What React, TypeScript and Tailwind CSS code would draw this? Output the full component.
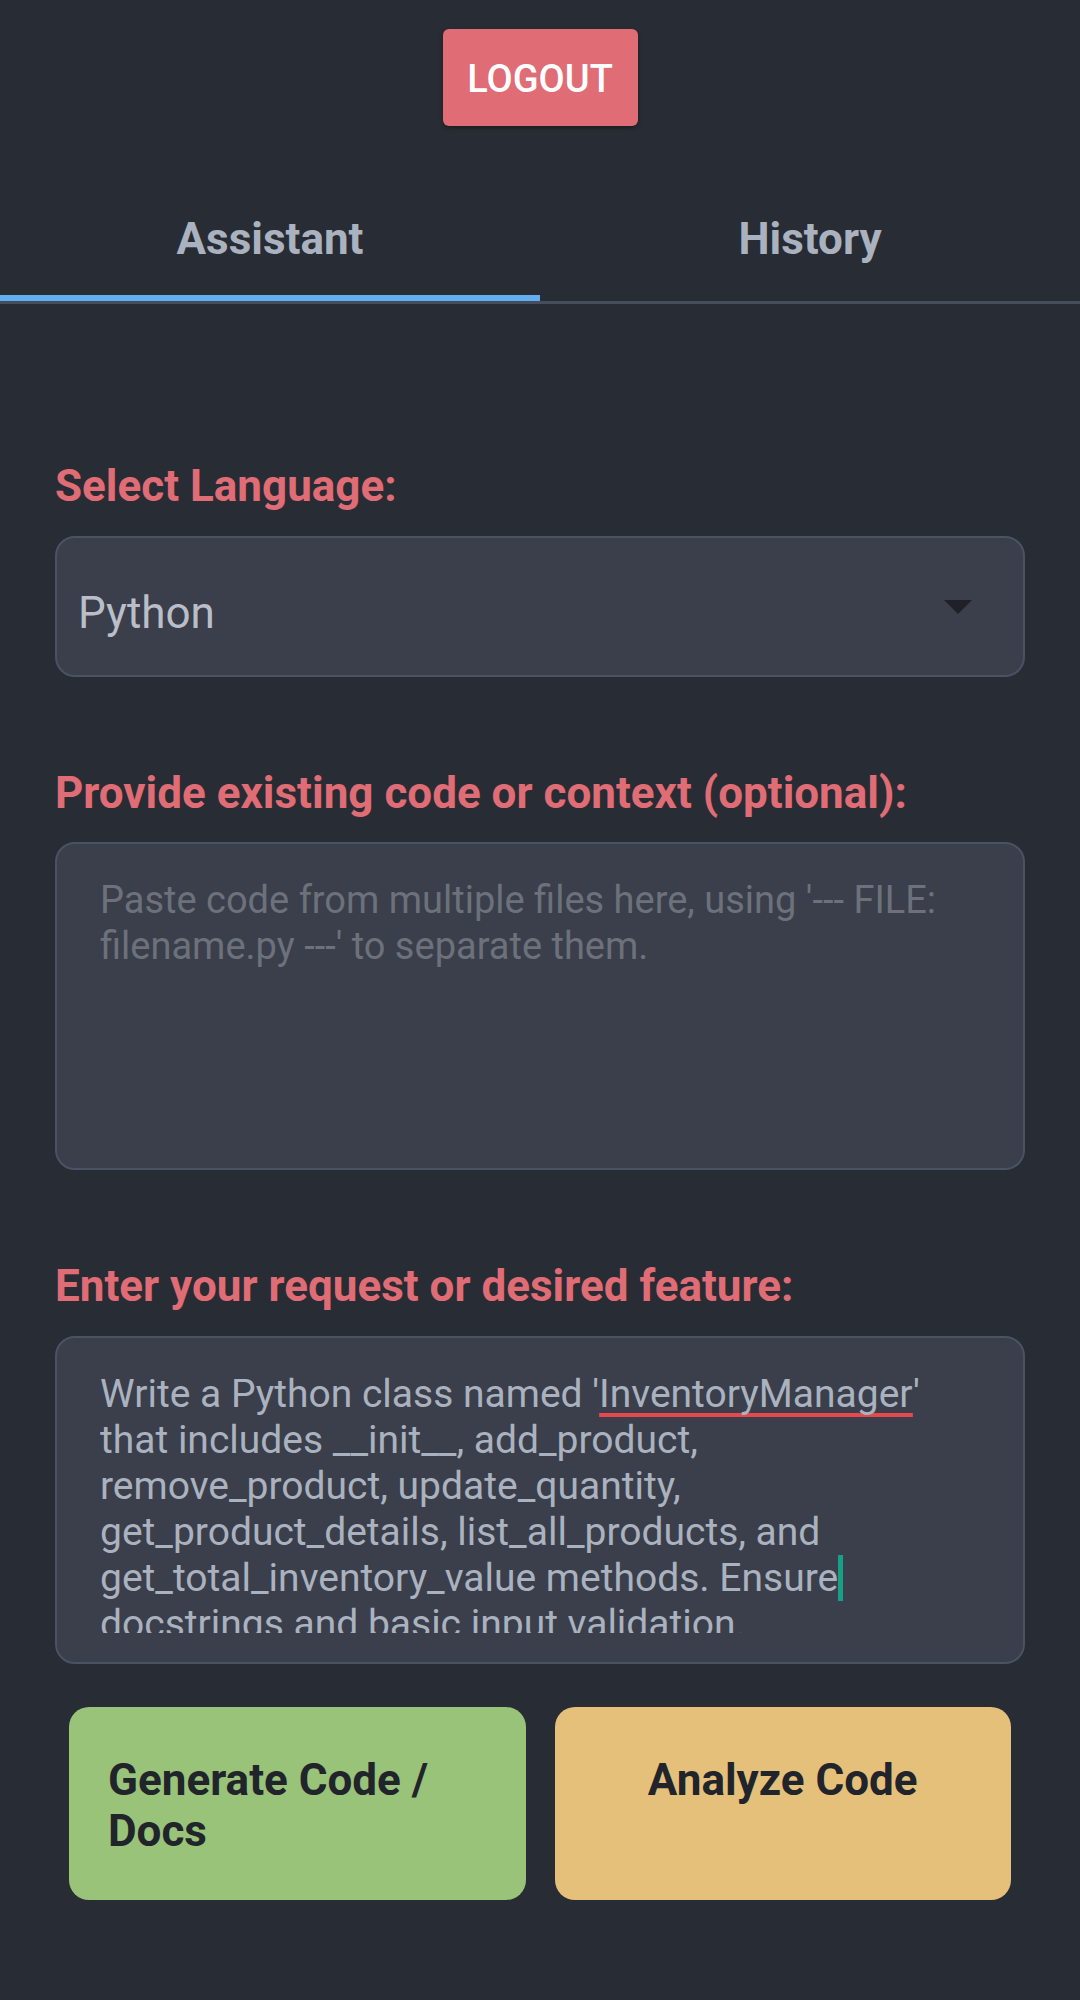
import { useState } from "react";

const request =
  "that includes __init__, add_product, remove_product, update_quantity, get_product_details, list_all_products, and get_total_inventory_value methods.";

export default function App() {
  const [tab, setTab] = useState<"assistant" | "history">("assistant");
  const [context, setContext] = useState("");

  return (
    <div className="min-h-screen bg-[#282c34] font-['Roboto',sans-serif]">
      <div className="flex justify-center pt-[29px]">
        <button className="h-[97px] w-[195px] rounded-[6px] bg-[#e06c75] pt-[4px] text-[38px] font-medium text-white shadow-[0_2px_4px_rgba(0,0,0,0.35)]">
          LOGOUT
        </button>
      </div>

      {/* tabs */}
      <div className="flex border-b-[3px] border-[#474d5a]">
        {(["assistant", "history"] as const).map((t) => (
          <button
            key={t}
            onClick={() => setTab(t)}
            className={`flex-1 pt-[87px] pb-[30px] text-center text-[44px] font-bold leading-[52px] text-[#abb2bf] border-b-[6px] ${
              tab === t ? "border-[#61afef]" : "border-transparent"
            }`}
          >
            {t === "assistant" ? "Assistant" : "History"}
          </button>
        ))}
      </div>

      <div className="px-[55px] pt-[156px] pb-[100px]">
        <label className="mb-[24px] block text-[44px] font-bold leading-[52px] text-[#e06c75]">
          Select Language:
        </label>
        <div className="flex h-[141px] items-center justify-between rounded-[20px] border-2 border-[#4b5263] bg-[#3a3f4b] pl-[21px] pr-[51px]">
          <span className="pt-[12px] text-[44px] text-[#b9bec8]">Python</span>
          <svg width="28" height="14" viewBox="0 0 28 14">
            <polygon points="0,0 28,0 14,14" fill="#1e2127" />
          </svg>
        </div>

        <label className="mt-[90px] mb-[23px] block text-[44px] font-bold leading-[52px] text-[#e06c75]">
          Provide existing code or context (optional):
        </label>
        <textarea
          value={context}
          onChange={(e) => setContext(e.target.value)}
          placeholder="Paste code from multiple files here, using '--- FILE: filename.py ---' to separate them."
          className="block h-[328px] w-full resize-none rounded-[20px] border-2 border-[#4b5263] bg-[#3a3f4b] pt-[33px] pl-[43px] pr-[47px] text-[38px] leading-[46px] text-[#abb2bf] outline-none placeholder:text-[#6c717b]"
        />

        <label className="mt-[90px] mb-[24px] block text-[44px] font-bold leading-[52px] text-[#e06c75]">
          Enter your request or desired feature:
        </label>
        <div className="h-[328px] rounded-[20px] border-2 border-[#4b5263] bg-[#3a3f4b] pt-[33px] pl-[43px] pr-[47px]">
          <div className="h-[262px] overflow-hidden text-[39px] leading-[46px] text-[#abb2bf]">
            Write a Python class named '
            <span className="underline decoration-[#e5484d] decoration-[4px] underline-offset-[6px] [text-decoration-skip-ink:none]">
              InventoryManager
            </span>
            ' {request}{" "}
            <span className="whitespace-nowrap">
              Ensure
              <span className="inline-block h-[46px] w-[5px] bg-[#16a085] align-top" />
            </span>{" "}
            docstrings and basic input validation.
          </div>
        </div>

        <div className="mt-[43px] grid grid-cols-2 gap-[29px] px-[14px]">
          <button className="flex h-[193px] items-start rounded-[20px] bg-[#98c379] pt-[48px] pl-[39px] pr-[39px] text-left text-[44px] font-bold leading-[51px] text-[#21252b]">
            Generate Code / Docs
          </button>
          <button className="flex h-[193px] items-start justify-center rounded-[20px] bg-[#e5c07b] pt-[48px] text-center text-[44px] font-bold leading-[51px] text-[#21252b]">
            Analyze Code
          </button>
        </div>
      </div>
    </div>
  );
}
